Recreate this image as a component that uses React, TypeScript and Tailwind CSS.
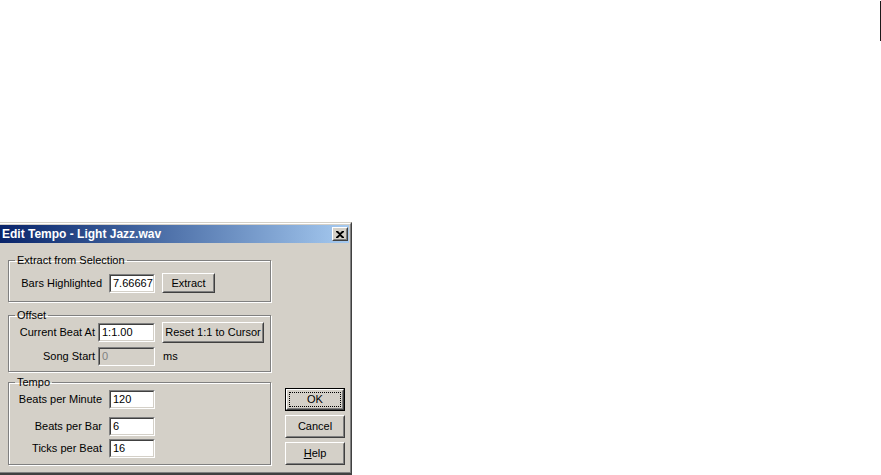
import React from 'react'

const font = "font-['Liberation_Sans',Arial,sans-serif]"

function Field({
  value,
  w,
  disabled = false,
}: {
  value: string
  w: string
  disabled?: boolean
}) {
  return (
    <div
      className={`${w} h-[19px] border border-t-[#808080] border-l-[#808080] border-r-white border-b-white`}
    >
      <div
        className={`h-full border border-t-[#404040] border-l-[#404040] border-r-[#d4d0c8] border-b-[#d4d0c8] pl-[2px] leading-[15px] ${
          disabled ? 'bg-[#d4d0c8] text-[#808080]' : 'bg-white text-black'
        }`}
      >
        {value}
      </div>
    </div>
  )
}

function Btn({
  children,
  w,
  h,
}: {
  children: React.ReactNode
  w: string
  h: string
}) {
  return (
    <div
      className={`${w} ${h} border border-t-white border-l-white border-r-[#404040] border-b-[#404040] bg-[#d4d0c8]`}
    >
      <div className="flex h-full items-center justify-center border border-t-[#d4d0c8] border-l-[#d4d0c8] border-r-[#808080] border-b-[#808080] leading-[13px]">
        {children}
      </div>
    </div>
  )
}

function Group({
  title,
  className,
  children,
}: {
  title: string
  className: string
  children: React.ReactNode
}) {
  return (
    <fieldset
      className={`w-[263px] border border-[#808080] shadow-[inset_1px_1px_0_#fff,1px_1px_0_#fff] ${className}`}
    >
      <legend className="ml-[6px] px-[2px] leading-[13px]">{title}</legend>
      {children}
    </fieldset>
  )
}

export default function App() {
  return (
    <div className={`flex h-[475px] w-[881px] flex-col overflow-hidden bg-white text-[11px] text-black ${font}`}>
      {/* stray line top right */}
      <div className="flex h-[222px] justify-end">
        <div className="mt-px h-[40px] w-px bg-[#1a1a1a]" />
      </div>

      {/* dialog */}
      <div className="h-[253px] w-[352px] border-t border-r border-b-2 border-t-[#d4d0c8] border-r-[#404040] border-b-[#404040]">
        <div className="flex h-full flex-col border-t border-r border-b border-t-white border-r-[#808080] border-b-[#808080] bg-[#d4d0c8] pt-px pr-px">
          {/* title bar */}
          <div className="flex h-[18px] items-center bg-linear-to-r from-[#0a246a] to-[#a6caf0] pl-[2px]">
            <span className="text-[12px] font-bold text-white">Edit Tempo - Light Jazz.wav</span>
            <div className="mr-[1px] ml-auto h-[14px] w-[16px] border border-t-white border-l-white border-r-[#404040] border-b-[#404040] bg-[#d4d0c8]">
              <div className="flex h-full items-center justify-center border border-t-[#d4d0c8] border-l-[#d4d0c8] border-r-[#808080] border-b-[#808080]">
                <svg width="8" height="7" viewBox="0 0 8 7">
                  <path d="M0 0h2l2 2 2-2h2v1L5 3.5 8 6v1H6L4 5 2 7H0V6l3-2.5L0 1z" fill="#000" />
                </svg>
              </div>
            </div>
          </div>

          {/* client */}
          <div className="flex flex-1 pl-[8px]">
            <div className="flex flex-col">
              <Group title="Extract from Selection" className="mt-[11px] pt-[6px] pb-[8px]">
                <div className="flex h-[20px] items-center">
                  <span className="w-[93px] text-right">Bars Highlighted</span>
                  <div className="ml-[7px]">
                    <Field value="7.66667" w="w-[46px]" />
                  </div>
                  <div className="ml-[7px]">
                    <Btn w="w-[53px]" h="h-[20px]">Extract</Btn>
                  </div>
                </div>
              </Group>

              <Group title="Offset" className="mt-[7px] pb-[5px]">
                <div className="flex h-[21px] items-center">
                  <span className="w-[86px] text-right">Current Beat At</span>
                  <div className="ml-[3px]">
                    <Field value="1:1.00" w="w-[57px]" />
                  </div>
                  <div className="ml-[7px]">
                    <Btn w="w-[102px]" h="h-[21px]">Reset 1:1 to Cursor</Btn>
                  </div>
                </div>
                <div className="mt-[4px] flex h-[19px] items-center">
                  <span className="w-[86px] text-right">Song Start</span>
                  <div className="ml-[3px]">
                    <Field value="0" w="w-[57px]" disabled />
                  </div>
                  <span className="ml-[8px]">ms</span>
                </div>
              </Group>

              <Group title="Tempo" className="mt-[4px] pt-[1px] pb-[6px]">
                <div className="flex h-[19px] items-center">
                  <span className="w-[93px] text-right">Beats per Minute</span>
                  <div className="ml-[7px]">
                    <Field value="120" w="w-[46px]" />
                  </div>
                </div>
                <div className="mt-[8px] flex h-[19px] items-center">
                  <span className="w-[93px] text-right">Beats per Bar</span>
                  <div className="ml-[7px]">
                    <Field value="6" w="w-[46px]" />
                  </div>
                </div>
                <div className="mt-[3px] flex h-[19px] items-center">
                  <span className="w-[93px] text-right">Ticks per Beat</span>
                  <div className="ml-[7px]">
                    <Field value="16" w="w-[46px]" />
                  </div>
                </div>
              </Group>
            </div>

            {/* buttons */}
            <div className="ml-[14px] flex w-[60px] flex-col gap-[4px] pt-[145px]">
              <div className="h-[23px] border border-black">
                <div className="h-full border border-t-white border-l-white border-r-[#404040] border-b-[#404040]">
                  <div className="h-full border border-t-[#d4d0c8] border-l-[#d4d0c8] border-r-[#808080] border-b-[#808080] p-px">
                    <div className="flex h-full items-center justify-center border border-dotted border-black leading-[13px]">
                      OK
                    </div>
                  </div>
                </div>
              </div>
              <Btn w="w-[60px]" h="h-[23px]">Cancel</Btn>
              <Btn w="w-[60px]" h="h-[23px]">
                <span>
                  <span className="underline">H</span>elp
                </span>
              </Btn>
            </div>
          </div>
        </div>
      </div>
    </div>
  )
}
